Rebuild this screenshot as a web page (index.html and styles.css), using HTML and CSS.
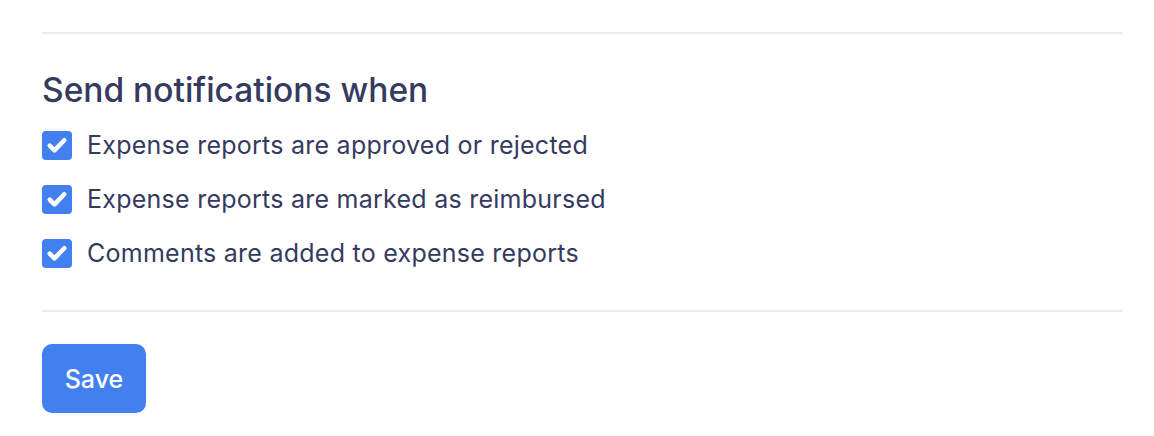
FILE: index.html
```html
<!DOCTYPE html>
<html lang="en">
<head>
  <meta charset="UTF-8">
  <title>Notifications</title>
  <link rel="stylesheet" href="styles.css">
</head>
<body>
  <div class="panel">
    <hr class="divider">
    <h2 class="title">Send notifications when</h2>
    <ul class="options">
      <li class="option"><span class="check"><svg viewBox="0 0 20 20"><path d="M4.8 10.4l3.4 3.4L15.2 6.6"/></svg></span>Expense reports are approved or rejected</li>
      <li class="option"><span class="check"><svg viewBox="0 0 20 20"><path d="M4.8 10.4l3.4 3.4L15.2 6.6"/></svg></span>Expense reports are marked as reimbursed</li>
      <li class="option"><span class="check"><svg viewBox="0 0 20 20"><path d="M4.8 10.4l3.4 3.4L15.2 6.6"/></svg></span>Comments are added to expense reports</li>
    </ul>
    <hr class="divider">
    <button class="save">Save</button>
  </div>
</body>
</html>
```

FILE: styles.css
```css
body {
  margin: 0;
  background: #fff;
  font-family: Inter, "Noto Sans", sans-serif;
  color: #353a5f;
}
.panel {
  padding: 32px 32px 0 42px;
  width: 1080px;
}
.divider {
  border: 0;
  border-top: 2px solid #ebeaf7;
  margin: 0;
}
.title {
  font-size: 33.5px;
  font-weight: 500;
  margin: 36px 0 8px;
  line-height: 40px;
}
.options {
  list-style: none;
  margin: 0 0 30px;
  padding: 0;
}
.option {
  display: flex;
  align-items: center;
  gap: 15px;
  height: 54px;
  font-size: 25px;
  letter-spacing: 0.25px;
}
.check {
  width: 30px;
  height: 29px;
  border-radius: 4px;
  background: #4380ef;
  display: flex;
  align-items: center;
  justify-content: center;
}
.check svg {
  width: 28px;
  height: 28px;
  fill: none;
  stroke: #fff;
  stroke-width: 3.2;
  stroke-linecap: round;
  stroke-linejoin: round;
}
.save {
  margin-top: 32px;
  width: 104px;
  height: 69px;
  border: 0;
  border-radius: 10px;
  background: #4380ef;
  color: #fff;
  font-family: Inter, sans-serif;
  font-size: 25px;
  font-weight: 500;
}
```
